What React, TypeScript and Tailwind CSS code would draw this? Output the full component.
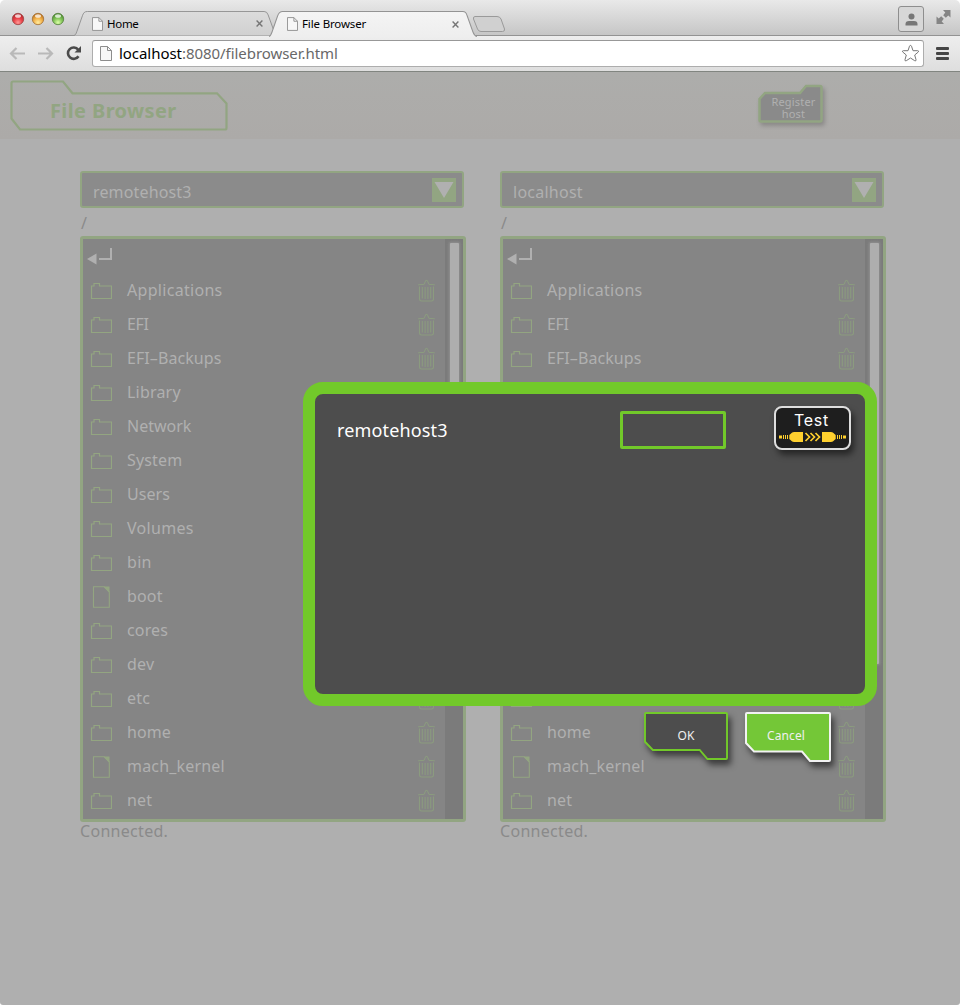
import React from "react";

type Entry = { name: string; kind: "dir" | "file"; tracking: string };

const entries: Entry[] = [
  { name: "Applications", kind: "dir", tracking: "tracking-[0.3px]" },
  { name: "EFI", kind: "dir", tracking: "tracking-[-0.3px]" },
  { name: "EFI–Backups", kind: "dir", tracking: "tracking-[0.08px]" },
  { name: "Library", kind: "dir", tracking: "tracking-[0.2px]" },
  { name: "Network", kind: "dir", tracking: "tracking-[0px]" },
  { name: "System", kind: "dir", tracking: "tracking-[0.15px]" },
  { name: "Users", kind: "dir", tracking: "tracking-[0.05px]" },
  { name: "Volumes", kind: "dir", tracking: "tracking-[0.3px]" },
  { name: "bin", kind: "dir", tracking: "tracking-[0.3px]" },
  { name: "boot", kind: "file", tracking: "tracking-[0.15px]" },
  { name: "cores", kind: "dir", tracking: "tracking-[0.15px]" },
  { name: "dev", kind: "dir", tracking: "tracking-[0.2px]" },
  { name: "etc", kind: "dir", tracking: "tracking-[0.2px]" },
  { name: "home", kind: "dir", tracking: "tracking-[0.05px]" },
  { name: "mach_kernel", kind: "file", tracking: "tracking-[0.18px]" },
  { name: "net", kind: "dir", tracking: "tracking-[0.2px]" },
];

function PageIcon({ className }: { className: string }) {
  return (
    <svg className={className} viewBox="0 0 12 15" fill="none">
      <path d="M.5 .5H7.5L11.5 4.5V14.5H.5Z" fill="#f7f7f7" stroke="#8d8d8d" />
      <path d="M7.5 .5V4.5H11.5" stroke="#8d8d8d" />
    </svg>
  );
}

function CloseIcon() {
  return (
    <svg className="h-[7px] w-[7px]" viewBox="0 0 7 7">
      <path d="M.6 .6L6.4 6.4M6.4 .6L.6 6.4" stroke="#757575" strokeWidth="1.4" />
    </svg>
  );
}

function FolderIcon() {
  return (
    <svg className="mt-[2px] h-[18px] w-[22px]" viewBox="0 0 22 18" fill="none">
      <path d="M1.500 4H4V1.500H9.500V4H21.500V16.500H1.500Z" stroke="#93a581" strokeWidth="1.2" />
    </svg>
  );
}

function FileIcon() {
  return (
    <svg className="mt-[2px] h-[22px] w-[18px]" viewBox="0 0 18 22" fill="none">
      <path d="M1.500 .7H12L17.300 6V21.300H1.500Z" stroke="#93a581" strokeWidth="1.1" />
      <path d="M11.500 .5H17.500V6.500Z" fill="#93a581" />
    </svg>
  );
}

function TrashIcon() {
  return (
    <svg className="mt-[1px] h-[23px] w-[18px]" viewBox="0 0 18 23" fill="none" stroke="#8b9b7f" strokeWidth="1.1">
      <path d="M1.300 6.200C1.300 5.500 2 5.500 3.500 5.500H6.500C8.300 5.500 7.500 1.200 9.500 1.200S10.700 5.500 12.500 5.500H15.500C17 5.500 17.700 5.500 17.700 6.200" />
      <path d="M2.500 7.500V19.800Q2.500 22 4.500 22H14.500Q16.500 22 16.500 19.800V7.500" />
      <path d="M5.300 8V19.500M8.100 8V20M10.900 8V20M13.700 8V19.500" />
    </svg>
  );
}

function ChromeTab({ title, active, box, label }: { title: string; active?: boolean; box: string; label: string }) {
  return (
    <div className={"relative flex items-center " + box}>
      <svg className="absolute inset-0 h-full w-full" viewBox="0 0 206 26" preserveAspectRatio="none" fill="none">
        <defs>
          <linearGradient id={active ? "tab-on" : "tab-off"} x1="0" y1="0" x2="0" y2="1">
            <stop offset="0" stopColor={active ? "#f4f4f4" : "#dcdcdc"} />
            <stop offset="1" stopColor={active ? "#eeeeee" : "#d0d0d0"} />
          </linearGradient>
        </defs>
        <path
          d="M0 25.500C1.500 25 2 24 3 21L8.500 5C9.500 2 10.500 .5 13.500 .5H192Q195 .5 196 4L202 21C203 24 204 25 206 25.500"
          fill={active ? "url(#tab-on)" : "url(#tab-off)"}
          stroke="#939393"
        />
        {active && <path d="M2 25.500H204" stroke="#eeeeee" strokeWidth="1.500" />}
      </svg>
      <PageIcon className="relative h-[14px] w-[11px]" />
      <span className={"relative ml-[4px] whitespace-nowrap text-[11.5px] leading-none text-black " + label}>{title}</span>
      <span className="relative ml-auto">
        <CloseIcon />
      </span>
    </div>
  );
}

function BrowserChrome() {
  return (
    <>
      <div className="flex h-[36px] items-start rounded-t-[5px] border-b border-[#939393] bg-gradient-to-b from-[#e9e9e9] to-[#c6c6c6]">
        <svg className="mt-[12px] ml-[11px] h-[14px] w-[54px]" viewBox="0 0 54 14">
          <defs>
            <radialGradient id="red" cx=".5" cy=".8" r=".75">
              <stop offset="0" stopColor="#ff9a98" />
              <stop offset=".5" stopColor="#ea4248" />
              <stop offset="1" stopColor="#b3262b" />
            </radialGradient>
            <radialGradient id="amber" cx=".5" cy=".8" r=".75">
              <stop offset="0" stopColor="#ffeca0" />
              <stop offset=".5" stopColor="#f4b44c" />
              <stop offset="1" stopColor="#b9701d" />
            </radialGradient>
            <radialGradient id="green" cx=".5" cy=".8" r=".75">
              <stop offset="0" stopColor="#dcffa6" />
              <stop offset=".5" stopColor="#84c65a" />
              <stop offset="1" stopColor="#4b8b2f" />
            </radialGradient>
          </defs>
          <circle cx="7" cy="7" r="5.700" fill="url(#red)" stroke="#9b4444" strokeWidth=".8" />
          <circle cx="27" cy="7" r="5.700" fill="url(#amber)" stroke="#a37035" strokeWidth=".8" />
          <circle cx="47" cy="7" r="5.700" fill="url(#green)" stroke="#56803f" strokeWidth=".8" />
          <ellipse cx="7" cy="4" rx="3" ry="1.800" fill="#fff" opacity=".75" />
          <ellipse cx="27" cy="4" rx="3" ry="1.800" fill="#fff" opacity=".75" />
          <ellipse cx="47" cy="4" rx="3" ry="1.800" fill="#fff" opacity=".75" />
        </svg>
        <ChromeTab title="Home" box="mt-[11px] ml-[9px] h-[25px] w-[204px] pr-[15px] pl-[18px]" label="tracking-[-0.3px]" />
        <ChromeTab title="File Browser" active box="z-10 mt-[11px] -ml-[9px] h-[26px] w-[208px] pr-[18px] pl-[18px]" label="tracking-[-0.15px]" />
        <svg className="mt-[16px] -ml-[5px] h-[17px] w-[34px]" viewBox="0 0 34 17">
          <path d="M3 .5H25Q28 .5 29 3L32.500 13Q33 15.500 30.500 15.500H9Q6.500 15.500 5.500 13L1.500 3Q1 .5 3 .5Z" fill="#d0d0d0" stroke="#9a9a9a" />
        </svg>
        <div className="mt-[6px] ml-auto flex h-[26px] w-[26px] items-center justify-center rounded-[3px] border border-[#8e8e8e] bg-[#d7d7d7]">
          <svg className="h-[13px] w-[13px]" viewBox="0 0 13 13" fill="#777">
            <circle cx="6.500" cy="3.500" r="3" />
            <path d="M.5 12.500V11Q.5 8.200 4 8H9Q12.500 8.200 12.500 11V12.500Z" />
          </svg>
        </div>
        <svg className="mt-[9px] mr-[9px] ml-[12px] h-[16px] w-[15px]" viewBox="0 0 15 16" fill="#858585">
          <path d="M7 1H14.500V8.500L12.300 6.500L9.800 8.800L7.200 6.200L9.300 3.500Z" />
          <path d="M.5 7.500L2.700 9.500L5.200 7.200L7.800 9.800L5.700 12.500L8 15H.5Z" />
        </svg>
      </div>
      <div className="flex h-[36px] items-center border-b border-[#818580] bg-gradient-to-b from-[#eeeeee] to-[#dedede]">
        <svg className="ml-[9px] h-[20px] w-[76px]" viewBox="0 0 76 20" fill="none">
          <path d="M16 9.500H2M7.500 4L2 9.500L7.500 15" stroke="#b9b9b9" strokeWidth="2.200" />
          <path d="M29 9.500H43M37.500 4L43 9.500L37.500 15" stroke="#b9b9b9" strokeWidth="2.200" />
          <path d="M69.200 5.700A5.700 5.700 0 1 0 69.500 12.200" stroke="#4b4b4b" strokeWidth="2.600" />
          <path d="M72 2V8.500H65.500Z" fill="#4b4b4b" />
        </svg>
        <div className="ml-[7px] flex h-[27px] w-[832px] items-center rounded-[3px] border border-[#adadad] border-t-[#989898] bg-white pr-[3px] pl-[7px]">
          <PageIcon className="h-[15px] w-[12px]" />
          <span className="ml-[7px] text-[15px] leading-none tracking-[-0.05px] whitespace-nowrap text-[#686868]">
            <span className="text-black">localhost</span>:8080/filebrowser.html
          </span>
          <svg className="ml-auto h-[19px] w-[19px]" viewBox="0 0 19 19" fill="none">
            <path
              d="M9.500 1.400Q10.200 1.400 10.500 2.200L12 6.700H16.700Q18.400 7 17.200 8.100L13.700 11L15 15.700Q15.200 17.500 13.700 16.700L9.500 14L5.300 16.700Q3.800 17.500 4 15.700L5.300 11L1.800 8.100Q.6 7 2.300 6.700H7L8.500 2.200Q8.800 1.400 9.500 1.400Z"
              stroke="#777"
            />
          </svg>
        </div>
        <svg className="ml-[12px] h-[14px] w-[13px]" viewBox="0 0 13 14" fill="#454545">
          <rect y="0" width="13" height="3" rx="1" />
          <rect y="5" width="13" height="3" rx="1" />
          <rect y="10" width="13" height="3" rx="1" />
        </svg>
      </div>
    </>
  );
}

function Pane({ host, tracking }: { host: string; tracking: string }) {
  return (
    <section className="w-[386px]">
      <div className="flex h-[37px] w-[384px] items-center justify-between rounded-[3px] border-2 border-[#92a582] bg-[#8b8b8b] pr-[6px] pl-[11px]">
        <span className={"mt-[4px] text-[16px] leading-none text-[#b0b0b0] " + tracking}>{host}</span>
        <span className="flex h-[24px] w-[24px] items-center justify-center bg-[#92a582]">
          <svg className="h-[16px] w-[20px]" viewBox="0 0 20 16">
            <path d="M.5 0H19.500L10 16Z" fill="#b0b0b0" />
          </svg>
        </span>
      </div>
      <div className="flex h-[28px] items-center pl-[1px] text-[16px] leading-none text-[#8a8a8a]">
        <span className="mt-[1px]">/</span>
      </div>
      <div className="flex h-[586px] overflow-hidden rounded-[3px] border-[3px] border-[#92a582] bg-[#858585]">
        <ul className="w-[362px]">
          <li className="flex h-[34px] items-center pl-[4px]">
            <svg className="h-[18px] w-[26px]" viewBox="0 0 26 18" fill="#b0b0b0">
              <path d="M0 12L9.500 6.500V17.500Z" />
              <path d="M12 11H23V1H25V13H12Z" />
            </svg>
          </li>
          {entries.map((e) => (
            <li key={e.name} className="flex h-[34px] items-center">
              <span className="flex w-[36px] justify-center">{e.kind === "dir" ? <FolderIcon /> : <FileIcon />}</span>
              <span className={"ml-[8px] text-[16px] leading-none text-[#b0b0b0] " + e.tracking}>{e.name}</span>
              <span className="mr-[10px] ml-auto">
                <TrashIcon />
              </span>
            </li>
          ))}
        </ul>
        <div className="w-[18px] bg-[#7b7b7b] pt-[4px]">
          <div className="ml-[5px] h-[421px] w-[9px] rounded-[1px] bg-[#aeaeae] shadow-[0_0_3px_1px_#929292]" />
        </div>
      </div>
      <p className="mt-[1px] text-[16px] leading-none tracking-[0.3px] text-[#8a8a8a]">Connected.</p>
    </section>
  );
}

function TestButton() {
  return (
    <button className="flex h-[44px] w-[77px] flex-col items-center rounded-[8px] border-2 border-[#dedede] bg-[#1e1e1e] shadow-[3px_5px_6px_rgba(0,0,0,0.5)]">
      <span className="mt-[4px] mr-[2px] font-['Inter',sans-serif] text-[16px] leading-none tracking-[0.7px] text-white">Test</span>
      <svg className="mt-[3px] h-[12px] w-[67px]" viewBox="0 0 67 12" fill="#ffd02e">
        <path d="M0 4.500H3V7.500H0ZM4 4H5V8H4ZM6 4H7V8H6ZM8 4H9V8H8ZM24 1V11H15Q13 11 11.500 9L10.300 8V4L11.500 3Q13 1 15 1Z" />
        <path d="M26.500 2L30.500 6L26.500 10M31.500 2L35.500 6L31.500 10M36.500 2L40.500 6L36.500 10" fill="none" stroke="#ffd02e" strokeWidth="1.700" />
        <path d="M43 1H52Q54 1 55.500 3L56.700 4V8L55.500 9Q54 11 52 11H43ZM58 4H59V8H58ZM60 4H61V8H60ZM62 4H63V8H62ZM64 4.500H67V7.500H64Z" />
      </svg>
    </button>
  );
}

function ShapedButton({ label, primary, className }: { label: string; primary?: boolean; className: string }) {
  return (
    <button className={"relative flex justify-center " + className}>
      <svg className="absolute inset-0 h-full w-full overflow-visible drop-shadow-[3px_5px_3px_rgba(0,0,0,0.55)]" viewBox="0 0 86 50" preserveAspectRatio="none">
        <path
          d="M2 1H84Q85 1 85 2V48Q85 49 84 49H65L57 39.500H9L1 31V2Q1 1 2 1Z"
          fill={primary ? "#74c737" : "#4d4d4d"}
          stroke={primary ? "#f2f2f2" : "#72c92a"}
          strokeWidth="2"
        />
      </svg>
      <span className={"relative mt-[18px] text-[12px] leading-none text-[#f0f0f0] " + (primary ? "mr-[4px] tracking-[0.1px]" : "")}>{label}</span>
    </button>
  );
}

export default function App() {
  return (
    <div className="relative flex h-[1005px] w-[960px] flex-col overflow-hidden bg-white font-['Noto_Sans',sans-serif]">
      <BrowserChrome />
      <main className="flex-1 rounded-b-[3px] bg-[#afafaf]">
        <header className="flex h-[67px] items-start bg-gradient-to-b from-[#adadab] to-[#acaaa8]">
          <div className="relative mt-[8px] ml-[10px] h-[51px] w-[218px]">
            <svg className="absolute inset-0" width="218" height="51" viewBox="0 0 218 51" fill="none">
              <path
                d="M3 1.500H53L62.500 13.300H207L216.500 23.500V48Q216.500 49.500 215 49.500H10L1.500 38.500V3Q1.500 1.500 3 1.500Z"
                stroke="#92a582"
                strokeWidth="2.200"
              />
            </svg>
            <h1 className="relative mt-[21px] ml-[40px] text-[20px] leading-none font-bold tracking-[0.38px] whitespace-nowrap text-[#92a582]">File Browser</h1>
          </div>
          <button className="relative mt-[12px] ml-[530px] flex h-[40px] w-[66px] justify-center">
            <svg className="absolute inset-0 drop-shadow-[2px_3px_2px_rgba(0,0,0,0.2)]" width="66" height="40" viewBox="0 0 66 40">
              <path d="M7 9H42L48 2H62Q63.500 2 63.500 3.500V36Q63.500 37.500 62 37.500H3Q1.500 37.500 1.500 36V15Z" fill="#8a8a8a" stroke="#92a582" strokeWidth="2.500" />
            </svg>
            <span className="relative mt-[12px] ml-[5px] flex flex-col items-center gap-px text-[11px] leading-[11px] tracking-[0.2px] text-[#b0b0b0]">
              <span>Register</span>
              <span>host</span>
            </span>
          </button>
        </header>
        <div className="mt-[32px] ml-[80px] flex gap-[34px]">
          <Pane host="remotehost3" tracking="tracking-[0.15px]" />
          <Pane host="localhost" tracking="tracking-[0.25px]" />
        </div>
      </main>

      <div className="absolute top-[382px] left-[303px] w-[574px]">
        <div className="flex h-[324px] items-start rounded-[20px] border-[12px] border-[#72c92a] bg-[#4d4d4d]">
          <span className="mt-[27px] ml-[22px] w-[283px] text-[18px] leading-none tracking-[0.15px] text-white">remotehost3</span>
          <input className="mt-[17px] h-[38px] w-[106px] rounded-[2px] border-[3px] border-[#72c92a] bg-transparent" />
          <div className="mt-[12px] ml-[48px]">
            <TestButton />
          </div>
        </div>
        <div className="mt-[6px] flex items-start pl-[341px]">
          <ShapedButton label="OK" className="h-[48px] w-[84px]" />
          <ShapedButton label="Cancel" primary className="ml-[17px] h-[50px] w-[86px]" />
        </div>
      </div>
    </div>
  );
}
